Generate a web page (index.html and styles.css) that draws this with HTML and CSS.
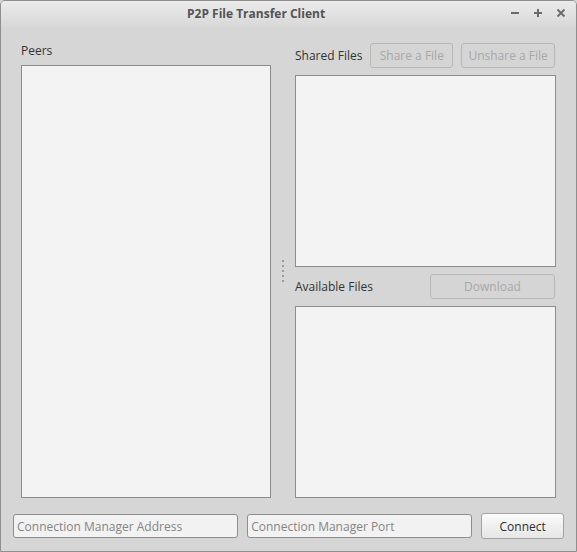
FILE: index.html
```html
<!DOCTYPE html>
<html>
<head>
<meta charset="utf-8">
<title>P2P File Transfer Client</title>
<link rel="stylesheet" href="styles.css">
</head>
<body>
<div class="window">
  <div class="titlebar">
    <div class="title">P2P File Transfer Client</div>
    <div class="controls">
      <svg class="ctl" width="10" height="10" viewBox="0 0 10 10"><rect x="1" y="4" width="8" height="2" fill="#6a6a6a"/></svg>
      <svg class="ctl" width="10" height="10" viewBox="0 0 10 10"><rect x="1" y="4" width="8" height="2" fill="#6a6a6a"/><rect x="4" y="1" width="2" height="8" fill="#6a6a6a"/></svg>
      <svg class="ctl" width="10" height="10" viewBox="0 0 10 10"><path d="M1.5 1.5 L8.5 8.5 M8.5 1.5 L1.5 8.5" stroke="#6a6a6a" stroke-width="1.8"/></svg>
    </div>
  </div>
  <div class="content">
    <div class="main">
      <div class="left">
        <div class="label peers-label">Peers</div>
        <div class="list peers"></div>
      </div>
      <div class="splitter">
        <span class="dot"></span><span class="dot"></span><span class="dot"></span><span class="dot"></span><span class="dot"></span>
      </div>
      <div class="right">
        <div class="header">
          <div class="label">Shared Files</div>
          <button class="btn disabled share">Share a File</button>
          <button class="btn disabled unshare">Unshare a File</button>
        </div>
        <div class="list files"></div>
        <div class="header">
          <div class="label grow">Available Files</div>
          <button class="btn disabled download">Download</button>
        </div>
        <div class="list files"></div>
      </div>
    </div>
    <div class="bottom">
      <input class="field" type="text" placeholder="Connection Manager Address">
      <input class="field" type="text" placeholder="Connection Manager Port">
      <button class="btn connect">Connect</button>
    </div>
  </div>
</div>
</body>
</html>
```
FILE: styles.css
```css
html, body {
  margin: 0;
  padding: 0;
  background: #d6d6d6;
}
body {
  font-family: "Open Sans", "Noto Sans", sans-serif;
  font-size: 12px;
  color: #333;
}
.window {
  width: 577px;
  height: 552px;
  box-sizing: border-box;
  border: 1px solid #8e8e8e;
  border-radius: 5px 5px 0 0;
  background: #d6d6d6;
  display: flex;
  flex-direction: column;
  overflow: hidden;
}
.titlebar {
  height: 26px;
  flex: none;
  background: linear-gradient(#ebebeb, #d8d8d8);
  display: flex;
  align-items: center;
}
.title {
  flex: 1;
  padding-left: 186px;
  font-weight: bold;
  color: #545454;
  font-size: 12px;
  line-height: 24px;
}
.controls {
  display: flex;
  gap: 13px;
  padding-right: 10px;
  padding-bottom: 2px;
  align-items: center;
}
.ctl {
  display: block;
}
.content {
  flex: 1;
  display: flex;
  flex-direction: column;
  padding: 16px 0 0 0;
}
.main {
  display: flex;
  padding-left: 20px;
  height: 455px;
}
.left {
  width: 250px;
  display: flex;
  flex-direction: column;
}
.label {
  color: #333;
  white-space: nowrap;
}
.peers-label {
  height: 21px;
  padding-top: 1px;
  line-height: 14px;
}
.list {
  box-sizing: border-box;
  background: #f3f3f3;
  border: 1px solid #8c8c8c;
}
.peers {
  flex: 1;
}
.splitter {
  width: 24px;
  display: flex;
  flex-direction: column;
  align-items: center;
  justify-content: center;
  gap: 3px;
}
.dot {
  width: 2px;
  height: 2px;
  background: #9a9a9a;
  display: block;
}
.right {
  width: 261px;
  display: flex;
  flex-direction: column;
  gap: 7px;
}
.header {
  height: 25px;
  display: flex;
  align-items: center;
  gap: 8px;
  padding-right: 1px;
}
.header .label {
  line-height: 14px;
  padding-top: 1px;
}
.grow {
  flex: 1;
}
.files {
  height: 192px;
}
.btn {
  box-sizing: border-box;
  height: 25px;
  font-family: "Open Sans", "Noto Sans", sans-serif;
  font-size: 12px;
  border-radius: 3px;
  padding: 0;
  margin: 0;
}
.btn.disabled {
  background: #d5d5d5;
  border: 1px solid #b7b7b7;
  color: #a7a7a7;
}
.share {
  width: 83px;
}
.unshare {
  width: 94px;
}
.download {
  width: 125px;
}
.bottom {
  display: flex;
  align-items: center;
  padding: 15px 12px 0 12px;
  gap: 9px;
}
.field {
  box-sizing: border-box;
  width: 226px;
  height: 24px;
  border: 1px solid #8e8e8e;
  border-radius: 3px;
  background: #f2f2f2;
  padding: 0 3px;
  font-family: "Open Sans", "Noto Sans", sans-serif;
  font-size: 12px;
  color: #333;
  margin: 0;
}
.field::placeholder {
  color: #858585;
}
.connect {
  width: 83px;
  height: 26px;
  background: linear-gradient(#fbfbfb, #e6e6e6);
  border: 1px solid #a3a3a3;
  color: #2e2e2e;
}
```
